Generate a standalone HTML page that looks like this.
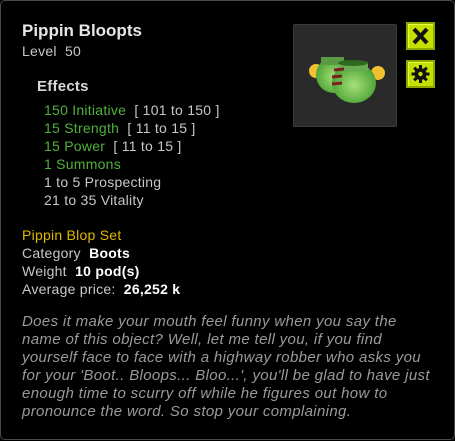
<!DOCTYPE html>
<html><head><style>
*{margin:0;padding:0;box-sizing:border-box}
html,body{width:455px;height:441px;background:#000;overflow:hidden}
body{font-family:"Liberation Sans",sans-serif;color:#c8c8c8;position:relative}
.frame{position:absolute;left:0;top:0;width:455px;height:440px;border:1.5px solid #4a4a4a;border-radius:5px}
.t{position:absolute;white-space:nowrap;font-size:14px;line-height:18px;letter-spacing:0.25px}
.g{color:#52b03c}
.w{color:#fff;font-weight:bold}
.img{position:absolute;left:293px;top:24px;width:104px;height:103px;background:#2a2a2a;border:1px solid #3a3a3a;border-radius:2px}
.btn{position:absolute;left:406px;width:29px;height:28px;background:#c4e000;border:2px solid #8fa800;box-shadow:inset 1px 1px 0 #e4ff40}
</style></head><body>
<div class="frame"></div>
<div class="t" style="left:22px;top:21px;font-size:17px;line-height:20px;font-weight:bold;color:#e6e6e6;letter-spacing:0">Pippin Bloopts</div>
<div class="t" style="left:22px;top:42px">Level&nbsp; 50</div>
<div class="t" style="left:37px;top:78px;font-size:15px;font-weight:bold;color:#d8d8d8">Effects</div>
<div class="t" style="left:44px;top:101px"><span class="g">150 Initiative</span>&nbsp; [ 101 to 150 ]</div>
<div class="t" style="left:44px;top:119px"><span class="g">15 Strength</span>&nbsp; [ 11 to 15 ]</div>
<div class="t" style="left:44px;top:137px"><span class="g">15 Power</span>&nbsp; [ 11 to 15 ]</div>
<div class="t g" style="left:44px;top:155px">1 Summons</div>
<div class="t" style="left:44px;top:173px">1 to 5 Prospecting</div>
<div class="t" style="left:44px;top:191px">21 to 35 Vitality</div>
<div class="t" style="left:22px;top:226px;color:#e0b800">Pippin Blop Set</div>
<div class="t" style="left:22px;top:244px">Category&nbsp; <span class="w">Boots</span></div>
<div class="t" style="left:22px;top:262px">Weight&nbsp; <span class="w">10 pod(s)</span></div>
<div class="t" style="left:22px;top:280px">Average price:&nbsp; <span class="w">26,252 k</span></div>
<div class="t" style="left:22px;top:313px;font-size:15px;letter-spacing:0.35px;font-style:italic;color:#9a9a9a;line-height:18px">Does it make your mouth feel funny when you say the<br>name of this object? Well, let me tell you, if you find<br>yourself face to face with a highway robber who asks you<br>for your 'Boot.. Bloops... Bloo...', you'll be glad to have just<br>enough time to scurry off while he figures out how to<br>pronounce the word. So stop your complaining.</div>
<div class="img">
<svg width="104" height="103" viewBox="0 0 104 103">
<defs><radialGradient id="gr" cx="50%" cy="55%" r="60%"><stop offset="0" stop-color="#a6e07a"/><stop offset="1" stop-color="#3f9a2a"/></radialGradient></defs>
<circle cx="22" cy="46" r="7" fill="#f0c030"/>
<circle cx="84" cy="48" r="7" fill="#f0c030"/>
<ellipse cx="40" cy="50" rx="18" ry="18" fill="url(#gr)"/>
<path d="M27 32 L27 40 L50 40 L50 32 Z" fill="#5a9a44"/>
<ellipse cx="60" cy="58" rx="22" ry="20" fill="url(#gr)"/>
<path d="M44 37 L44 46 L74 46 L74 37 Z" fill="#6aaa50"/>
<ellipse cx="59" cy="38" rx="15" ry="3" fill="#2e6a1e"/>
<path d="M40 45 L50 44 M38 52 L48 51 M38 59 L48 58" stroke="#7a2020" stroke-width="3"/>
</svg>
</div>
<div class="btn" style="top:22px"><svg width="25" height="24" viewBox="0 0 25 24"><path d="M6 5 L19 19 M19 5 L6 19" stroke="#111" stroke-width="4"/></svg></div>
<div class="btn" style="top:60px"><svg width="25" height="24" viewBox="0 0 25 24"><g fill="#111"><circle cx="12.5" cy="12" r="6"/><rect x="11" y="3" width="3" height="18"/><rect x="3.5" y="10.5" width="18" height="3"/><rect x="11" y="3" width="3" height="18" transform="rotate(45 12.5 12)"/><rect x="11" y="3" width="3" height="18" transform="rotate(-45 12.5 12)"/></g><circle cx="12.5" cy="12" r="2.2" fill="#c4e000"/></svg></div>
</body></html>
